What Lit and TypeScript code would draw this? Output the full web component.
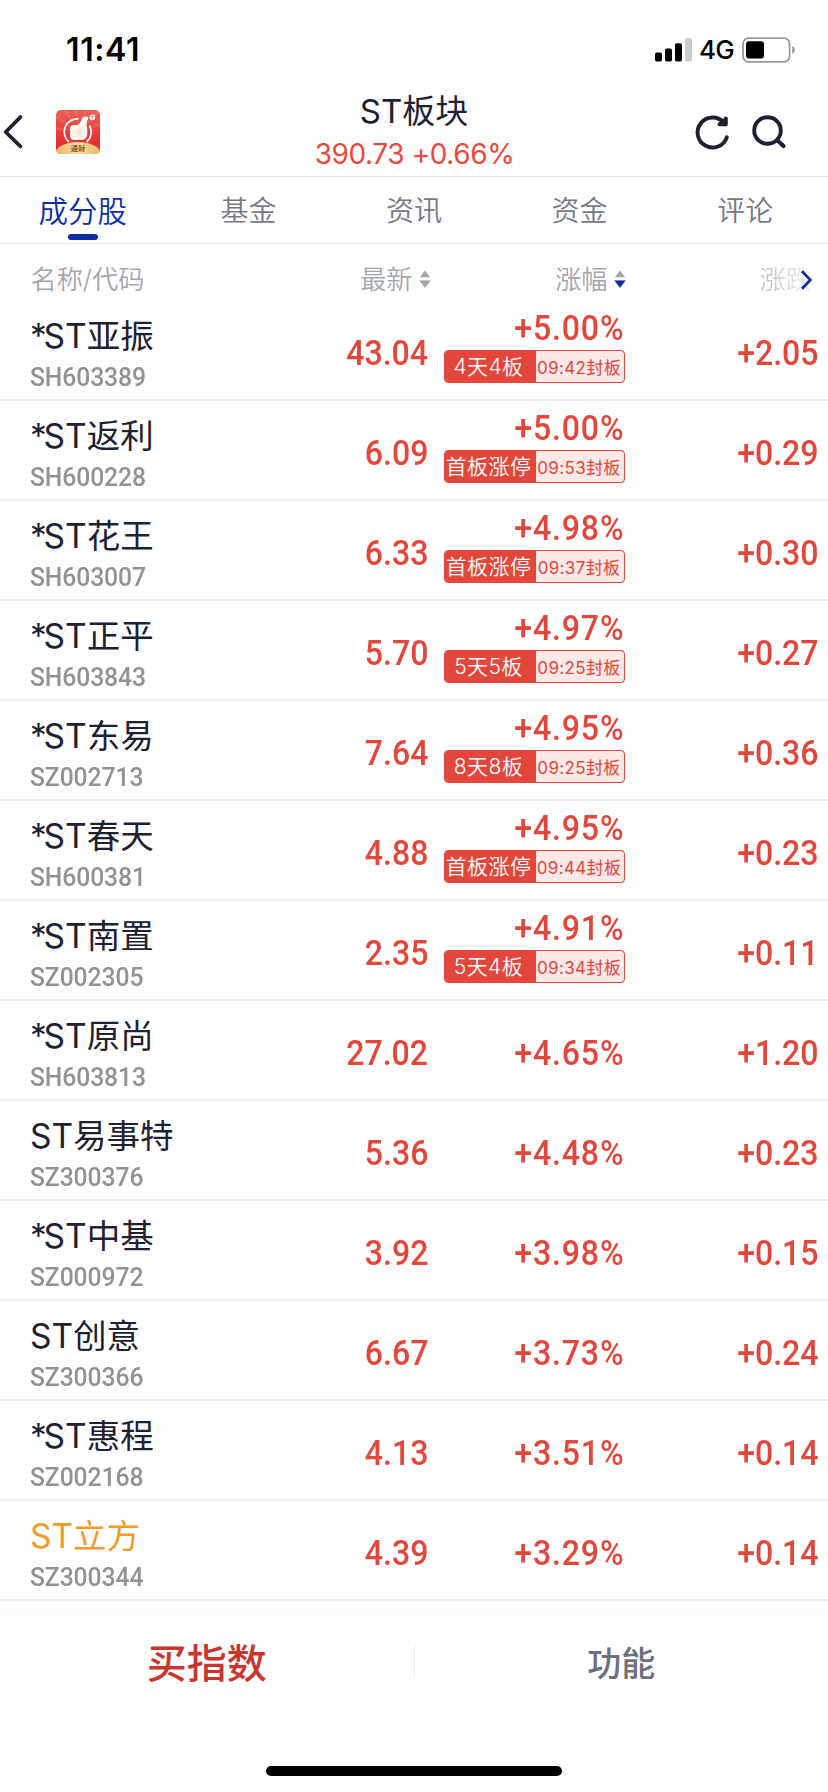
import { LitElement, html, css, svg, nothing } from "lit";
import { customElement, property } from "lit/decorators.js";
import { classMap } from "lit/directives/class-map.js";

interface Stock {
  name: string;
  code: string;
  price: string;
  pct: string;
  change: string;
  streak?: string;
  sealed?: string;
  margin?: boolean;
}

const STOCKS: Stock[] = [
  { name: "*ST亚振", code: "SH603389", price: "43.04", pct: "+5.00%", change: "+2.05", streak: "4天4板", sealed: "09:42封板" },
  { name: "*ST返利", code: "SH600228", price: "6.09", pct: "+5.00%", change: "+0.29", streak: "首板涨停", sealed: "09:53封板" },
  { name: "*ST花王", code: "SH603007", price: "6.33", pct: "+4.98%", change: "+0.30", streak: "首板涨停", sealed: "09:37封板" },
  { name: "*ST正平", code: "SH603843", price: "5.70", pct: "+4.97%", change: "+0.27", streak: "5天5板", sealed: "09:25封板" },
  { name: "*ST东易", code: "SZ002713", price: "7.64", pct: "+4.95%", change: "+0.36", streak: "8天8板", sealed: "09:25封板" },
  { name: "*ST春天", code: "SH600381", price: "4.88", pct: "+4.95%", change: "+0.23", streak: "首板涨停", sealed: "09:44封板" },
  { name: "*ST南置", code: "SZ002305", price: "2.35", pct: "+4.91%", change: "+0.11", streak: "5天4板", sealed: "09:34封板" },
  { name: "*ST原尚", code: "SH603813", price: "27.02", pct: "+4.65%", change: "+1.20" },
  { name: "ST易事特", code: "SZ300376", price: "5.36", pct: "+4.48%", change: "+0.23" },
  { name: "*ST中基", code: "SZ000972", price: "3.92", pct: "+3.98%", change: "+0.15" },
  { name: "ST创意", code: "SZ300366", price: "6.67", pct: "+3.73%", change: "+0.24" },
  { name: "*ST惠程", code: "SZ002168", price: "4.13", pct: "+3.51%", change: "+0.14" },
  { name: "ST立方", code: "SZ300344", price: "4.39", pct: "+3.29%", change: "+0.14", margin: true },
];

@customElement("stock-row")
class StockRow extends LitElement {
  @property({ attribute: false }) stock!: Stock;

  static styles = css`
    :host {
      display: grid;
      grid-template-columns: 30px 251px 147px 196px 195px;
      height: 100px;
      box-sizing: border-box;
      border-bottom: 2px solid #ededee;
      color: #e3463a;
    }
    .ident { grid-column: 2; display: flex; flex-direction: column; padding-top: 13px; white-space: nowrap; }
    .name { font-size: 33.5px; line-height: 44px; color: #1d2132; }
    .star { letter-spacing: -3.2px; }
    .name.margin { color: #f09a2c; }
    .code { font: 500 26px/32px Roboto, sans-serif; color: #929292; transform: scaleX(0.95); transform-origin: left; letter-spacing: -0.1px; margin-top: 3px; }
    .cell { display: flex; flex-direction: column; align-items: flex-end; justify-content: flex-start; padding-top: 32px; }
    .cell.tagged { padding-top: 7px; }
    .num { font: 500 34.5px/40px Roboto, sans-serif; transform: scaleX(0.93); transform-origin: right; white-space: nowrap; }
    .pct { letter-spacing: 0.9px; margin-right: -0.5px; }
    .tag {
      display: grid; grid-template-columns: 91px 88px; height: 31px; margin-top: 2px; margin-right: -0.5px;
      border: 1px solid #e3463a; border-radius: 4px; background: #fbe9e8; overflow: hidden; white-space: nowrap;
    }
    .streak { background: #e3463a; color: #fff; font-size: 21px; line-height: 31px; text-align: center; font-weight: 350; letter-spacing: 0.4px; text-indent: -3px; }
    .sealed { font-size: 17px; line-height: 34px; text-align: center; letter-spacing: 0.35px; text-indent: -1px; }
  `;

  render() {
    const s = this.stock;
    const starred = s.name.startsWith("*");
    return html`
      <div class="ident">
        <span class=${classMap({ name: true, margin: !!s.margin })}>${starred
          ? html`<span class="star">*</span>${s.name.slice(1)}`
          : s.name}</span>
        <span class="code">${s.code}</span>
      </div>
      <div class="cell"><span class="num">${s.price}</span></div>
      <div class=${classMap({ cell: true, tagged: !!s.streak })}>
        <span class="num pct">${s.pct}</span>
        ${s.streak
          ? html`<div class="tag"><span class="streak">${s.streak}</span><span class="sealed">${s.sealed}</span></div>`
          : nothing}
      </div>
      <div class="cell"><span class="num">${s.change}</span></div>
    `;
  }
}

const sorter = (down: string) => html`
  <svg class="sorter" width="12" height="18" viewBox="0 0 12 18">
    <path d="M6 0.5 11.2 7.3H0.8Z" fill="#a3a4ac" />
    <path d="M6 17.5 11.2 10.7H0.8Z" fill=${down} stroke=${down} stroke-width=".6" stroke-linejoin="round" />
  </svg>`;

const rays = [-80, -55, -30, -5, 20, 45, 70].map(
  (a) => svg`<path d="M22 22 19.5 -14H24.5Z" fill="#fff" opacity=".09" transform="rotate(${a} 22 22)" />`
);

@customElement("app-root")
class AppRoot extends LitElement {
  static styles = css`
    :host {
      display: flex; flex-direction: column; height: 1792px; overflow: hidden; background: #fff;
      font-family: Inter, "Noto Sans CJK SC", sans-serif; color: #1d2132;
    }
    svg { display: block; }
    .status { height: 88px; box-sizing: border-box; padding: 31px 32px 0 66px; display: flex; justify-content: space-between; color: #000; }
    .time { font-size: 32px; font-weight: 600; line-height: 38px; letter-spacing: 0.6px; }
    .signals { display: flex; height: 38px; align-items: center; }
    .net { font-size: 26px; font-weight: 500; line-height: 38px; width: 43px; margin-left: 6px; letter-spacing: -0.8px; }
    .head { height: 88px; display: grid; grid-template-columns: 1fr 300px 1fr; border-bottom: 1px solid #e6e6e8; }
    .left { display: flex; align-items: flex-start; padding: 22px 0 0 2px; gap: 32px; }
    .back { margin-top: 4px; }
    .title { display: flex; flex-direction: column; align-items: center; white-space: nowrap; padding-top: 1px; }
    .name { font-size: 33px; line-height: 44px; }
    .quote { font-size: 28px; line-height: 36px; color: #e8493c; letter-spacing: -0.4px; margin: 3px -1px 0 0; }
    .right { display: flex; justify-content: flex-end; padding: 26px 41px 0 0; gap: 21px; }
    .tabs { height: 66px; display: grid; grid-template-columns: repeat(5, 1fr); border-bottom: 1px solid #e9e9eb; }
    .tab { display: flex; flex-direction: column; align-items: center; color: #777983; font-size: 28px; font-weight: 350; line-height: 57px; padding-top: 6px; box-sizing: border-box; }
    .tab.on { color: #0f2ea3; font-size: 29.5px; }
    .tab.on::after { content: ""; width: 30px; height: 6px; border-radius: 3px; background: #0f2ea3; margin-top: -6px; }
    .cols { height: 57px; display: grid; grid-template-columns: 30.5px 251px 149px 195px 202.5px; font-size: 26.2px; font-weight: 350; line-height: 71px; color: #a5a6ad; white-space: nowrap; }
    .first { grid-column: 2; }
    .col { display: flex; justify-content: flex-end; gap: 6px; }
    .sorter { margin-top: 26px; }
    .last { display: flex; justify-content: flex-end; padding-right: 16px; }
    .fade { background: linear-gradient(90deg, #bdbec4, #ededf0 90%); background-clip: text; -webkit-background-clip: text; color: transparent; }
    .more { margin: 25px 0 0 -12px; }
    .foot { height: 191px; background: linear-gradient(#fdfdfe, #fafbfd 14px, #fff 15px); display: flex; flex-direction: column; }
    .actions { flex: 1; padding-top: 15px; display: grid; grid-template-columns: 1fr 1px 1fr; align-items: start; text-align: center; }
    .buy { font-size: 40px; font-weight: 500; line-height: 96px; color: #c93630; }
    .func { font-size: 34px; font-weight: 500; line-height: 96px; color: #6d6f7c; }
    .rule { height: 32px; background: #ececee; margin-top: 30px; }
    .home { width: 296px; height: 10px; border-radius: 5px; background: #000; align-self: center; margin-bottom: 16px; }
  `;

  render() {
    return html`
      <div class="status">
        <span class="time">11:41</span>
        <div class="signals">
          <svg width="38" height="24" viewBox="0 0 38 24">
            <rect x="0" y="14.5" width="7" height="9" rx="1.8" />
            <rect x="10" y="10.5" width="7" height="13" rx="1.8" />
            <rect x="20" y="5.3" width="7" height="18.2" rx="1.8" />
            <rect x="30" y="0.3" width="7" height="23.2" rx="1.8" fill="#cbcbcb" />
          </svg>
          <span class="net">4G</span>
          <svg width="54" height="26" viewBox="0 0 54 26">
            <rect x="1" y="1.2" width="46.6" height="23.6" rx="5.5" fill="none" stroke="#999" stroke-width="1.8" />
            <rect x="4" y="4.2" width="18" height="17.4" rx="3" />
            <path d="M50.2 9a4.3 4.3 0 0 1 0 8Z" fill="#999" />
          </svg>
        </div>
      </div>
      <div class="head">
        <div class="left">
          <svg class="back" width="22" height="36" viewBox="0 0 22 36">
            <path d="M18.5 3 3.7 18 18.5 32.5" fill="none" stroke="#1d2132" stroke-width="3.8" stroke-linecap="round" stroke-linejoin="round" />
          </svg>
          <svg width="44" height="44" viewBox="0 0 44 44">
            <defs>
              <linearGradient id="bg" x2="0" y2="1"><stop stop-color="#ea6058" /><stop offset=".7" stop-color="#e63030" /></linearGradient>
              <linearGradient id="gold" x2="1"><stop stop-color="#e9b567" /><stop offset=".5" stop-color="#f8dda5" /><stop offset="1" stop-color="#e9b567" /></linearGradient>
              <radialGradient id="hand" cy=".65"><stop stop-color="#fce3cf" /><stop offset="1" stop-color="#fff" /></radialGradient>
              <clipPath id="round"><rect width="44" height="44" rx="5" /></clipPath>
            </defs>
            <g clip-path="url(#round)">
              <rect width="44" height="44" fill="url(#bg)" />
              ${rays}
              <path d="M22.500 9A13 13 0 0 0 13 32M33.500 15.500A13 13 0 0 1 30.500 32" fill="none" stroke="#fff" stroke-width="1.700" />
              <path d="M14.500 17.500c.2-1.700 1.200-2.500 2.700-2.500h4c2.400-.8 3.200-3 4.300-5.500.9-2.200 2.600-2.900 4.600-2.900 2 0 2.600.8 2.100 2.100-1 1.800-1.900 3.800-1.500 6.700.4 3 .9 6 .5 8.800-.4 3.600-2.400 5.800-5.600 5.800h-7.800c-2.400 0-3.400-1.200-3.300-2.700-.8-.7-.8-2 0-2.700-.8-.9-.8-2 0-2.800-.8-1.100-.8-3.200 0-4.300Z" fill="url(#hand)" />
              <circle cx="36.300" cy="7.300" r="2.900" fill="#fff" />
              <path d="M36.300 9V6M35 6.900 36.300 5.600 37.600 6.900" fill="none" stroke="#e96a60" stroke-width=".8" />
              <ellipse cx="22" cy="44" rx="23" ry="12" fill="url(#gold)" />
              <text x="22" y="41" text-anchor="middle" font-size="7.200" font-weight="700" fill="#8b5a2b">通财</text>
            </g>
          </svg>
        </div>
        <div class="title">
          <span class="name">ST板块</span>
          <span class="quote">390.73 +0.66%</span>
        </div>
        <div class="right">
          <svg width="36" height="36" viewBox="0 0 36 36">
            <path d="M32.800 23.300A15 15 0 1 1 30 8.700" fill="none" stroke="#1d2132" stroke-width="3.900" stroke-linecap="round" />
            <path d="M31.800 4.500V10.200H25.500L30 6.500" fill="none" stroke="#1d2132" stroke-width="4" stroke-linecap="round" stroke-linejoin="round" />
          </svg>
          <svg width="36" height="36" viewBox="0 0 36 36">
            <circle cx="16.500" cy="16.500" r="13.300" fill="none" stroke="#1d2132" stroke-width="3.900" />
            <path d="M26.500 26.500 32.500 32" fill="none" stroke="#1d2132" stroke-width="4.200" stroke-linecap="round" />
          </svg>
        </div>
      </div>
      <div class="tabs">
        ${["成分股", "基金", "资讯", "资金", "评论"].map(
          (t, i) => html`<div class=${classMap({ tab: true, on: i === 0 })}>${t}</div>`
        )}
      </div>
      <div class="cols">
        <span class="first">名称/代码</span>
        <span class="col">最新${sorter("#a3a4ac")}</span>
        <span class="col">涨幅${sorter("#0f2ea3")}</span>
        <span class="last">
          <span class="fade">涨跌</span>
          <svg class="more" width="12" height="22" viewBox="0 0 12 22">
            <path d="M2 2.300 10.300 10.900 2 19.700" fill="none" stroke="#0f2ea3" stroke-width="2.800" />
          </svg>
        </span>
      </div>
      <div class="list">${STOCKS.map((s) => html`<stock-row .stock=${s}></stock-row>`)}</div>
      <div class="foot">
        <div class="actions">
          <span class="buy">买指数</span>
          <span class="rule"></span>
          <span class="func">功能</span>
        </div>
        <div class="home"></div>
      </div>
    `;
  }
}
